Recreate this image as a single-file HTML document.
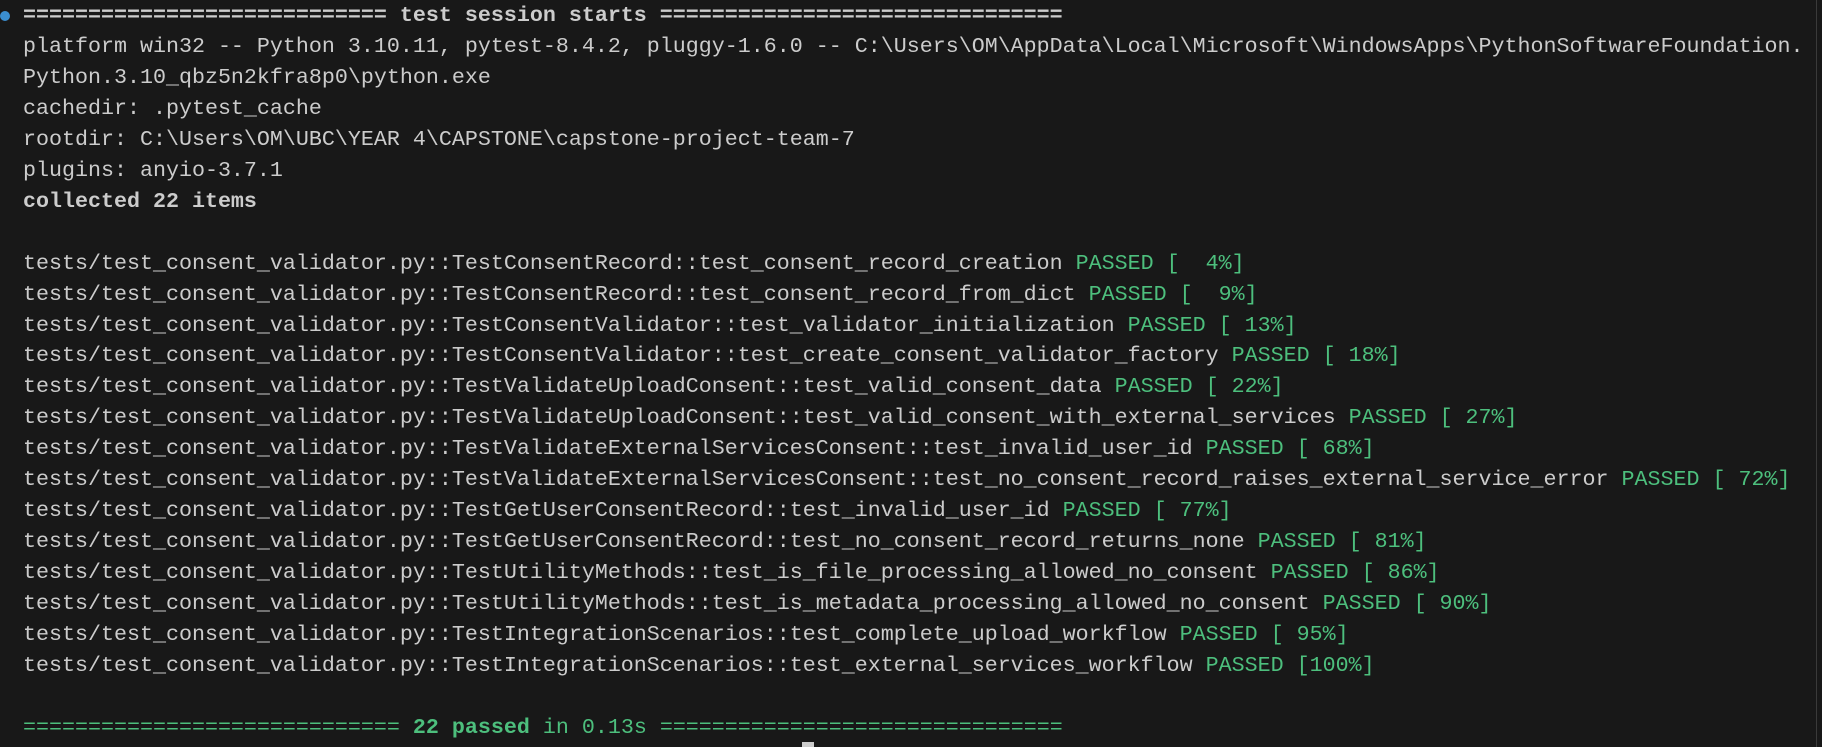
<!DOCTYPE html>
<html><head><meta charset="utf-8"><style>
html,body{margin:0;padding:0;background:#181818;width:1822px;height:747px;overflow:hidden}
#t{position:absolute;left:23px;top:1px;font-family:"Liberation Mono",monospace;font-size:21.66px;line-height:30.95px;color:#cccccc;white-space:pre}
.g{color:#4dbf7d}
b{font-weight:bold}
#dot{position:absolute;left:0px;top:11px;width:10px;height:10px;border-radius:50%;background:#3b8ed0}
#div{position:absolute;left:1816px;top:0;width:1px;height:747px;background:#3a3a3a}
#cur{position:absolute;left:802px;top:742px;width:12px;height:5px;background:#cccccc}
</style></head><body>
<div id="dot"></div><div id="div"></div>
<div id="t"><b>============================ test session starts ===============================</b>
platform win32 -- Python 3.10.11, pytest-8.4.2, pluggy-1.6.0 -- C:\Users\OM\AppData\Local\Microsoft\WindowsApps\PythonSoftwareFoundation.
Python.3.10_qbz5n2kfra8p0\python.exe
cachedir: .pytest_cache
rootdir: C:\Users\OM\UBC\YEAR 4\CAPSTONE\capstone-project-team-7
plugins: anyio-3.7.1
<b>collected 22 items</b>

tests/test_consent_validator.py::TestConsentRecord::test_consent_record_creation <span class="g">PASSED [  4%]</span>
tests/test_consent_validator.py::TestConsentRecord::test_consent_record_from_dict <span class="g">PASSED [  9%]</span>
tests/test_consent_validator.py::TestConsentValidator::test_validator_initialization <span class="g">PASSED [ 13%]</span>
tests/test_consent_validator.py::TestConsentValidator::test_create_consent_validator_factory <span class="g">PASSED [ 18%]</span>
tests/test_consent_validator.py::TestValidateUploadConsent::test_valid_consent_data <span class="g">PASSED [ 22%]</span>
tests/test_consent_validator.py::TestValidateUploadConsent::test_valid_consent_with_external_services <span class="g">PASSED [ 27%]</span>
tests/test_consent_validator.py::TestValidateExternalServicesConsent::test_invalid_user_id <span class="g">PASSED [ 68%]</span>
tests/test_consent_validator.py::TestValidateExternalServicesConsent::test_no_consent_record_raises_external_service_error <span class="g">PASSED [ 72%]</span>
tests/test_consent_validator.py::TestGetUserConsentRecord::test_invalid_user_id <span class="g">PASSED [ 77%]</span>
tests/test_consent_validator.py::TestGetUserConsentRecord::test_no_consent_record_returns_none <span class="g">PASSED [ 81%]</span>
tests/test_consent_validator.py::TestUtilityMethods::test_is_file_processing_allowed_no_consent <span class="g">PASSED [ 86%]</span>
tests/test_consent_validator.py::TestUtilityMethods::test_is_metadata_processing_allowed_no_consent <span class="g">PASSED [ 90%]</span>
tests/test_consent_validator.py::TestIntegrationScenarios::test_complete_upload_workflow <span class="g">PASSED [ 95%]</span>
tests/test_consent_validator.py::TestIntegrationScenarios::test_external_services_workflow <span class="g">PASSED [100%]</span>

<span class="g">============================= <b>22 passed</b> in 0.13s ===============================</span></div>
<div id="cur"></div>
</body></html>
